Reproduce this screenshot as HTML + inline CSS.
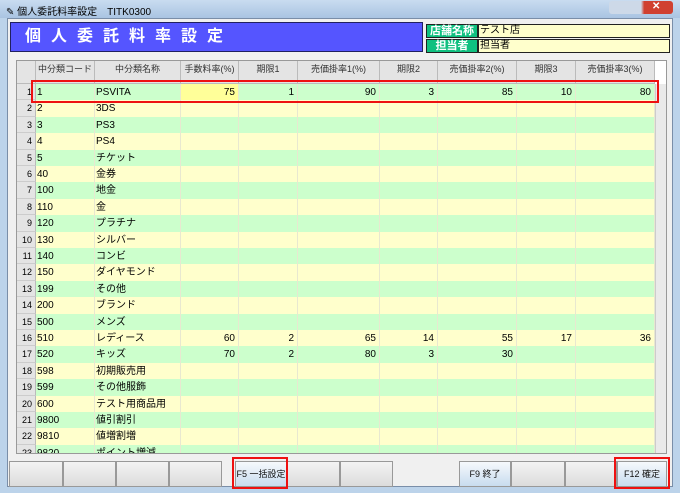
<!DOCTYPE html><html><head><meta charset="utf-8"><style>
*{margin:0;padding:0;box-sizing:border-box}
body{width:680px;height:493px;overflow:hidden;background:#bcd3ea;font-family:"Liberation Sans","Noto Sans CJK JP",sans-serif;font-size:10px;position:relative}
.abs{position:absolute}
.title{left:0;top:0;width:680px;height:18px;background:linear-gradient(#c9dcf0,#a9c4e2)}
.client{left:7px;top:18px;width:666px;height:469px;background:#f0f0f0;border:1px solid #7a8ea8}
.hdr{left:10px;top:22px;width:413px;height:30px;background:#5555ff;border:1px solid #202060;color:#fff;font-size:16px;font-weight:bold;letter-spacing:10px;padding:1px 0 0 14px;line-height:26px}
.lab{background:#10c080;color:#fff;font-weight:bold;font-size:11px;text-align:center;border:1px solid #222;height:14px;line-height:12px}
.val{background:#ffffcc;border:1px solid #222;height:14px;line-height:12px;font-size:10px;padding-left:1px}
.grid{left:16px;top:60px;width:651px;height:394px;background:#fff;border:1px solid #999;overflow:hidden}
.row{position:absolute;left:0;height:16.4px;width:638px;display:flex}
.row div{border-right:1px solid #e8e8d0;height:100%;line-height:17px;white-space:nowrap;overflow:hidden;font-size:10px}
.hrow div{background:#e4e4e4;border-right:1px solid #bbb;border-bottom:1px solid #bbb;text-align:center;color:#333;font-size:9px;line-height:17px}
.r{text-align:right;padding-right:3px}
.row div.n{background:#e4e4e4;text-align:right;padding-right:3px;font-size:9px;border-bottom:1px solid #ccc;border-right:1px solid #bbb}
.g{background:#ccffcc}.y{background:#ffffcc}
.btn{position:absolute;top:461px;height:26px;border:1px solid #999;background:linear-gradient(#f4f4f4,#dcdcdc);font-size:9px;text-align:center;line-height:24px;color:#111}
.bb{background:linear-gradient(#f6f9fc,#c8dcef)}
.red{position:absolute;border:2px solid #ee1111}
</style></head><body>
<div class="abs title"><span style="position:absolute;left:6px;top:3px;font-size:10px">✎ 個人委託料率設定　TITK0300</span>
<div class="abs" style="left:609px;top:1px;width:64px;height:13px;border-radius:3px;background:linear-gradient(90deg,#cdd9e8 0,#cdd9e8 50%,#d04030 55%)"></div><span class="abs" style="left:652px;top:1px;color:#fff;font-weight:bold">✕</span></div>
<div class="abs client"></div>
<div class="abs hdr">個人委託料率設定</div>
<div class="abs lab" style="left:426px;top:24px;width:52px">店舗名称</div>
<div class="abs val" style="left:478px;top:24px;width:192px">テスト店</div>
<div class="abs lab" style="left:426px;top:39px;width:52px">担当者</div>
<div class="abs val" style="left:478px;top:39px;width:192px">担当者</div>
<div class="abs grid">
<div class="row hrow" style="top:0;height:23px"><div style="width:19px"></div><div style="width:59px">中分類コード</div><div style="width:86px">中分類名称</div><div style="width:58px">手数料率(%)</div><div style="width:59px">期限1</div><div style="width:82px">売価掛率1(%)</div><div style="width:58px">期限2</div><div style="width:79px">売価掛率2(%)</div><div style="width:59px">期限3</div><div style="width:79px">売価掛率3(%)</div></div>
<div id="rows"></div>
<div class="abs" style="left:638px;top:23px;width:12px;height:372px;background:#eaeaea;border-left:1px solid #ccc"></div>
</div>
<script>
var d=[["1","PSVITA","75","1","90","3","85","10","80"],["2","3DS"],["3","PS3"],["4","PS4"],["5","チケット"],["40","金券"],["100","地金"],["110","金"],["120","プラチナ"],["130","シルバー"],["140","コンビ"],["150","ダイヤモンド"],["199","その他"],["200","ブランド"],["500","メンズ"],["510","レディース","60","2","65","14","55","17","36"],["520","キッズ","70","2","80","3","30"],["598","初期販売用"],["599","その他服飾"],["600","テスト用商品用"],["9800","値引割引"],["9810","値増割増"],["9820","ポイント増減"]];
var w=[59,86,58,59,82,58,79,59,79],h="";
d.forEach(function(r,i){var c=i%2?"y":"g";h+='<div class="row" style="top:'+(23+i*16.4)+'px"><div class="n" style="width:19px">'+(i+1)+'</div>';
for(var k=0;k<9;k++){var v=r[k]||"";var st=(i==0&&k==2)?"background:#ffff99;":"";h+='<div class="'+c+(k>1?' r':'')+'" style="'+st+'width:'+w[k]+'px;'+(k<2?'padding-left:1px':'')+'">'+v+'</div>';}h+='</div>';});
document.getElementById("rows").innerHTML=h;
</script>
<div class="red" style="left:31px;top:80px;width:628px;height:23px"></div>
<div class="btn" style="left:9px;width:54px"></div><div class="btn" style="left:63px;width:53px"></div><div class="btn" style="left:116px;width:53px"></div><div class="btn" style="left:169px;width:53px"></div>
<div class="btn bb" style="left:235px;width:52px">F5 一括設定</div><div class="btn" style="left:287px;width:53px"></div><div class="btn" style="left:340px;width:53px"></div>
<div class="btn bb" style="left:459px;width:52px">F9 終了</div><div class="btn" style="left:511px;width:54px"></div><div class="btn" style="left:565px;width:52px"></div>
<div class="btn bb" style="left:617px;width:50px">F12 確定</div>
<div class="red" style="left:232px;top:457px;width:56px;height:32px"></div>
<div class="red" style="left:614px;top:457px;width:56px;height:32px"></div>
</body></html>
